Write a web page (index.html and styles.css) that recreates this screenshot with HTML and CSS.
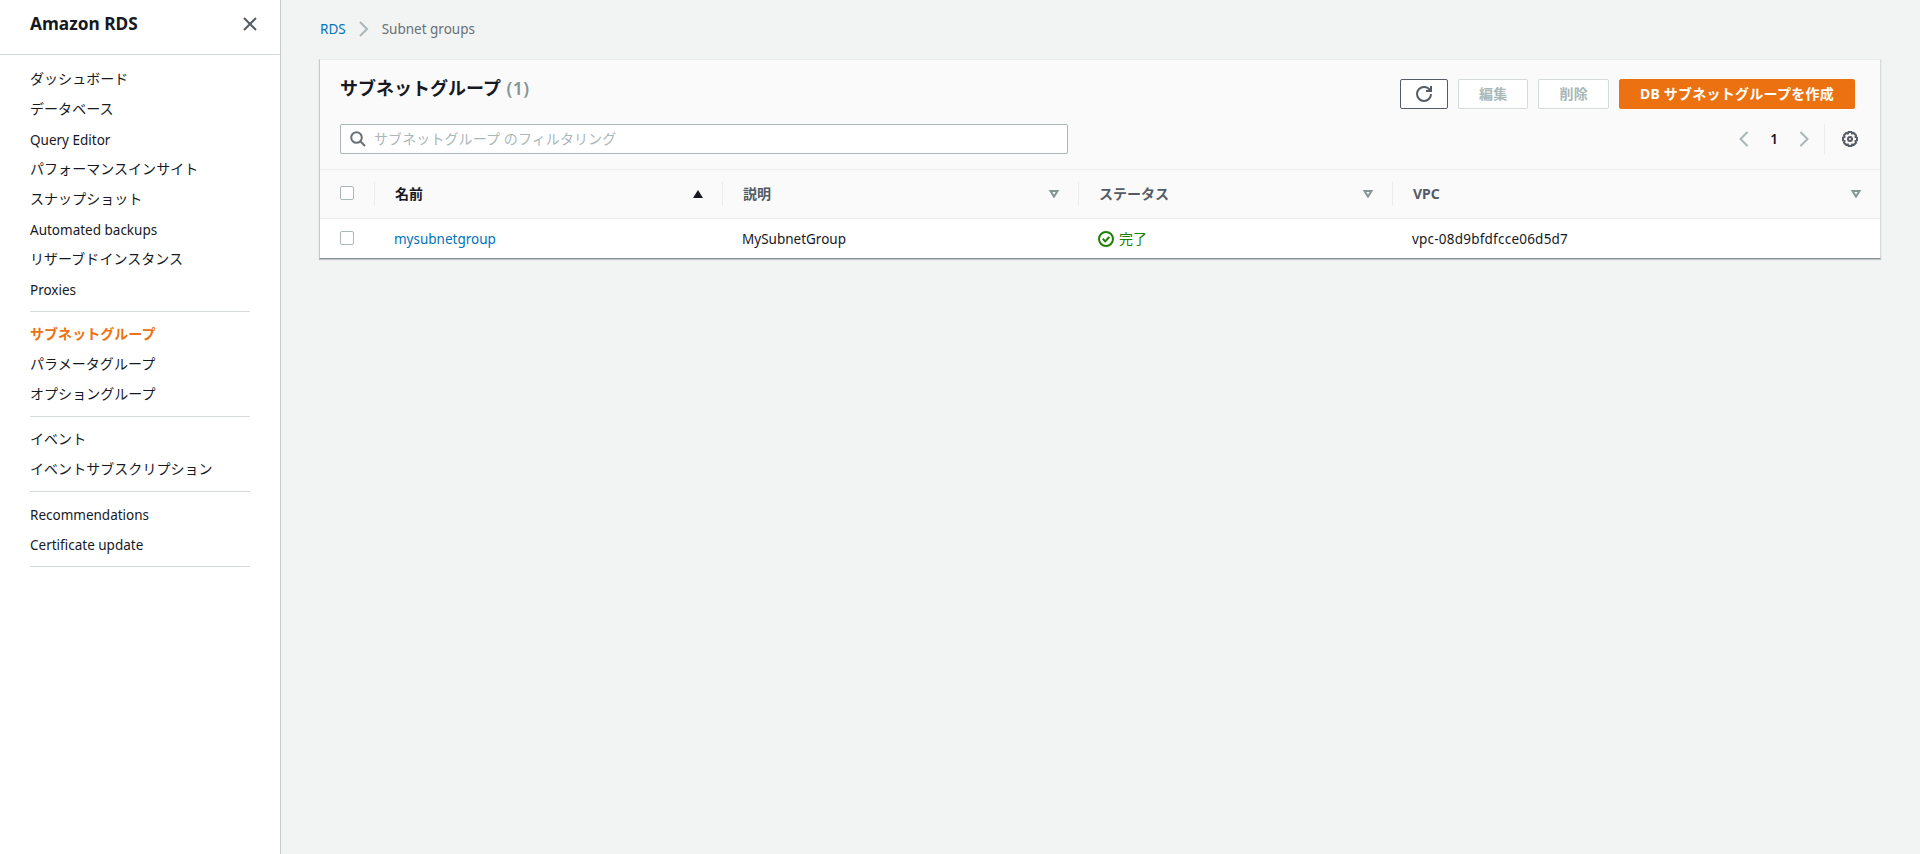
FILE: index.html
```
<!DOCTYPE html>
<html lang="ja">
<head>
  <meta charset="UTF-8">
  <meta name="viewport" content="width=device-width, initial-scale=1.0">
  <title>RDS - Subnet groups</title>
  <link rel="stylesheet" href="styles.css">
</head>
<body>
  <nav id="sidebar">
    <div class="sidebar-header">
      <h2>Amazon RDS</h2>
      <svg class="icon close" viewBox="0 0 16 16"><path d="M2 2l12 12M14 2L2 14"/></svg>
    </div>
    <div class="sidebar-links">
      <a>ダッシュボード</a>
      <a>データベース</a>
      <a class="latin">Query Editor</a>
      <a>パフォーマンスインサイト</a>
      <a>スナップショット</a>
      <a class="latin">Automated backups</a>
      <a>リザーブドインスタンス</a>
      <a class="latin">Proxies</a>
      <hr>
      <a class="active">サブネットグループ</a>
      <a>パラメータグループ</a>
      <a>オプショングループ</a>
      <hr>
      <a>イベント</a>
      <a>イベントサブスクリプション</a>
      <hr>
      <a class="latin">Recommendations</a>
      <a class="latin">Certificate update</a>
      <hr>
    </div>
  </nav>

  <main id="content">
    <div class="breadcrumb">
      <a class="link">RDS</a>
      <svg class="icon chevron" viewBox="0 0 16 16"><path d="M4 1l7 7-7 7"/></svg>
      <span>Subnet groups</span>
    </div>

    <section class="panel">
      <div class="panel-header">
        <div class="title-row">
          <h1>サブネットグループ <span class="count">(1)</span></h1>
          <div class="actions">
            <button class="btn refresh">
              <svg class="icon" viewBox="0 0 16 16"><path d="M15 8c0 3.87-3.13 7-7 7s-7-3.13-7-7 3.13-7 7-7c2.79 0 5.2 1.63 6.33 4"/><path d="M10 5h5V0"/></svg>
            </button>
            <button class="btn disabled">編集</button>
            <button class="btn disabled">削除</button>
            <button class="btn primary">DB サブネットグループを作成</button>
          </div>
        </div>
        <div class="filter-row">
          <div class="filter">
            <svg class="icon search" viewBox="0 0 16 16"><circle cx="6.5" cy="6.5" r="5.3"/><path d="M10.3 10.3L15 15"/></svg>
            <input type="text" placeholder="サブネットグループ のフィルタリング">
          </div>
          <div class="paging">
            <svg class="icon chevron" viewBox="0 0 16 16"><path d="M11.5 1l-7 7 7 7"/></svg>
            <span class="page">1</span>
            <svg class="icon chevron" viewBox="0 0 16 16"><path d="M4.5 1l7 7-7 7"/></svg>
            <span class="settings">
              <svg class="icon gear" viewBox="0 0 16 16"><path d="M6.6 1h2.8l.7 1.5 1.6-.5 2.3 2.3-.5 1.6 1.5.7v2.8l-1.5.7.5 1.6-2.3 2.3-1.6-.5-.7 1.5H6.6l-.7-1.5-1.6.5L2 11.7l.5-1.6L1 9.4V6.6l1.5-.7L2 4.3 4.3 2l1.6.5z"/><circle cx="8" cy="8" r="2"/></svg>
            </span>
          </div>
        </div>
      </div>

      <table>
        <colgroup>
          <col class="col-check">
          <col class="col-name">
          <col class="col-desc">
          <col class="col-status">
          <col>
        </colgroup>
        <thead>
          <tr>
            <th><div class="cell"><span class="checkbox"></span></div></th>
            <th class="sorted"><div class="cell">名前<svg class="sort" viewBox="0 0 10 8"><path d="M0 8L5 0l5 8z"/></svg></div></th>
            <th><div class="cell">説明<svg class="sort open" viewBox="0 0 10 8"><path d="M1.5 1h7L5 6.6z"/></svg></div></th>
            <th><div class="cell">ステータス<svg class="sort open" viewBox="0 0 10 8"><path d="M1.5 1h7L5 6.6z"/></svg></div></th>
            <th><div class="cell"><span>VPC</span><svg class="sort open" viewBox="0 0 10 8"><path d="M1.5 1h7L5 6.6z"/></svg></div></th>
          </tr>
        </thead>
        <tbody>
          <tr>
            <td><span class="checkbox"></span></td>
            <td><a class="link">mysubnetgroup</a></td>
            <td>MySubnetGroup</td>
            <td>
              <span class="status">
                <svg class="icon" viewBox="0 0 16 16"><circle cx="8" cy="8" r="7"/><path d="M4.8 7.8l2.4 2.6 4.1-4.4"/></svg>
                完了
              </span>
            </td>
            <td class="vpc">vpc-08d9bfdfcce06d5d7</td>
          </tr>
        </tbody>
      </table>
    </section>
  </main>
</body>
</html>
```
FILE: styles.css
```
* {
  box-sizing: border-box;
}

body {
  display: flex;
  margin: 0;
  height: 100vh;
  font-family: "Noto Sans", "Noto Sans CJK JP", sans-serif;
  font-size: 14px;
  line-height: 22px;
  color: #16191f;
  background-color: #f2f3f3;
  overflow: hidden;
}

.icon {
  width: 16px;
  height: 16px;
  flex: none;
  fill: none;
  stroke: #545b64;
  stroke-width: 2;
}

.link {
  color: #0073bb;
}

/* sidebar */
#sidebar {
  width: 281px;
  flex: none;
  background-color: #fff;
  border-right: 1px solid #c5cacb;
}

.sidebar-header {
  display: flex;
  justify-content: space-between;
  height: 55px;
  padding: 13px 22px 0 30px;
  border-bottom: 1px solid #d5dbdb;
}

.sidebar-header h2 {
  margin: 0;
  font-size: 17.3px;
  line-height: 22px;
}

.close {
  margin-top: 3px;
}

.sidebar-links {
  padding: 9px 30px 0 30px;
}

.sidebar-links a {
  display: block;
  height: 30px;
  line-height: 29px;
  letter-spacing: 0.05px;
  white-space: nowrap;
}

.sidebar-links .latin {
  font-size: 13.5px;
  line-height: 32px;
  letter-spacing: 0;
}

.sidebar-links .active {
  color: #ec7211;
  font-weight: 700;
}

.sidebar-links hr {
  height: 1px;
  margin: 7px 0;
  border: none;
  background-color: #d5dbdb;
}

/* main area */
#content {
  flex: 1;
  padding: 18px 39px 0 38px;
}

.breadcrumb {
  display: flex;
  align-items: center;
  gap: 10px;
  height: 22px;
  padding-left: 1px;
  font-size: 13.5px;
  color: #687078;
}

.chevron {
  stroke: #aab7b8;
}

.panel {
  margin-top: 19px;
  background-color: #fff;
  border: 1px solid #d5dbdb;
  border-left-color: #c5cacb;
  border-top-color: #eaeded;
  border-bottom-color: #879196;
  box-shadow: 0 1px 1px rgba(0, 28, 36, 0.2);
}

.panel-header {
  height: 110px;
  padding: 19px 25px 0 20px;
  background-color: #fafafa;
  border-bottom: 1px solid #eaeded;
}

.title-row,
.filter-row {
  display: flex;
  justify-content: space-between;
}

h1 {
  margin: -2px 0 0;
  font-size: 18px;
  line-height: 22px;
}

.count {
  margin-left: 1px;
  color: #879596;
  font-weight: 600;
  letter-spacing: 0.3px;
}

.actions {
  display: flex;
  gap: 10px;
}

.btn {
  display: flex;
  align-items: center;
  height: 30px;
  padding: 0 20px 2px;
  border: 1px solid #545b64;
  border-radius: 2px;
  background-color: #fff;
  font-family: inherit;
  font-size: 14px;
  font-weight: 700;
  letter-spacing: 0.25px;
  white-space: nowrap;
}

.refresh {
  padding: 0 15px;
}

.disabled {
  border-color: #d5dbdb;
  color: #aab7b8;
}

.primary {
  border-color: #ec7211;
  background-color: #ec7211;
  color: #fff;
}

.filter-row {
  margin-top: 15px;
}

.filter {
  display: flex;
  align-items: center;
  width: 728px;
  height: 30px;
  padding-left: 9px;
  gap: 8px;
  background-color: #fff;
  border: 1px solid #aab7b8;
  border-radius: 2px;
}

.search {
  stroke: #687078;
}

.filter input {
  flex: 1;
  padding: 0 0 2px;
  border: none;
  outline: none;
  background: none;
  font-family: inherit;
  font-size: 14px;
  letter-spacing: 0.1px;
}

.filter input::placeholder {
  color: #aab7b8;
}

.paging {
  display: flex;
  align-items: center;
  height: 30px;
}

.page {
  width: 44px;
  text-align: center;
  font-size: 13.5px;
  font-weight: 600;
}

.settings {
  display: flex;
  align-items: center;
  height: 30px;
  margin: 0 -3px 0 12px;
  padding-left: 17px;
  border-left: 1px solid #eaeded;
}

/* table */
table {
  width: 100%;
  table-layout: fixed;
  border-collapse: separate;
  border-spacing: 0;
}

.col-check {
  width: 55px;
}

.col-name {
  width: 348px;
}

.col-desc {
  width: 356px;
}

.col-status {
  width: 314px;
}

th {
  height: 49px;
  padding: 0;
  background-color: #fafafa;
  border-bottom: 1px solid #eaeded;
  color: #545b64;
  text-align: left;
}

.cell {
  display: flex;
  align-items: center;
  justify-content: space-between;
  height: 24px;
  padding: 0 19px 0 20px;
  border-right: 1px solid #eaeded;
}

th:last-child .cell {
  border-right: none;
}

.sorted {
  color: #16191f;
}

.sort {
  width: 10px;
  height: 8px;
  fill: #16191f;
}

.open {
  fill: none;
  stroke: #879596;
  stroke-width: 2;
}

td {
  height: 39px;
  padding: 0 19px;
  font-size: 13.5px;
}

td:first-child {
  padding-left: 20px;
}

.checkbox {
  display: block;
  width: 14px;
  height: 14px;
  flex: none;
  margin-bottom: 2px;
  background-color: #fff;
  border: 1px solid #aab7b8;
  border-radius: 2px;
}

.status {
  display: flex;
  align-items: center;
  gap: 5px;
  font-size: 14px;
  color: #1d8102;
}

.status .icon {
  stroke: #1d8102;
}

.vpc {
  letter-spacing: 0.22px;
}
```
